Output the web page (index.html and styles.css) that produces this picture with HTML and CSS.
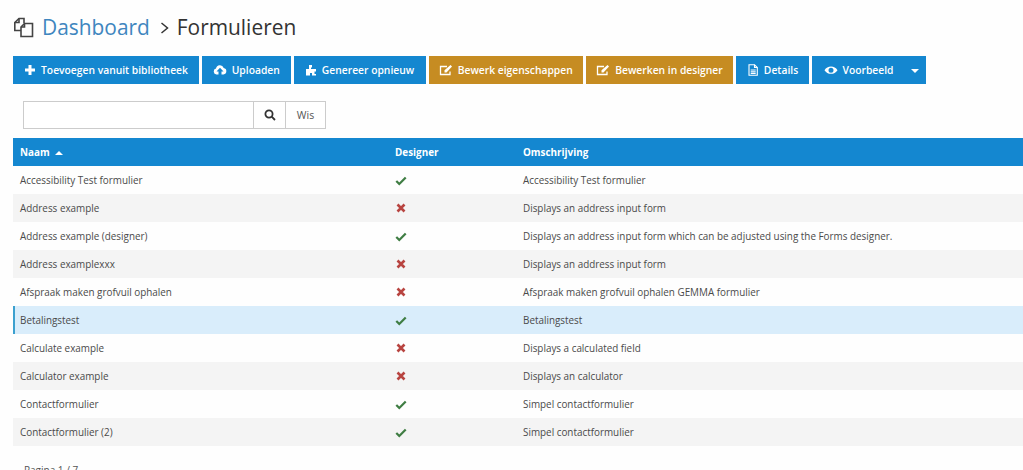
FILE: index.html
```html
<!DOCTYPE html>
<html lang="nl">

<head>
  <meta charset="UTF-8">
  <title>Formulieren</title>
  <link rel="stylesheet" href="styles.css">
</head>

<body>
  <h1 class="title">
    <svg class="title-icon" width="21" height="21" viewBox="0 0 21 21" fill="none" stroke="#444" stroke-width="1.6">
      <path d="M8 13.5H1.8V5.5L6 1.5H11V6"/>
      <path d="M6 1.5V5.5H1.8"/>
      <path d="M8 19.5V10L11.5 6.5H19.5V19.5Z"/>
      <path d="M11.5 6.5V10H8"/>
    </svg>
    <a class="crumb" href="#">Dashboard</a>
    <svg class="sep" width="9" height="12" viewBox="0 0 9 12" fill="none" stroke="#333" stroke-width="1.500"><path d="M1.500 1 7.500 6 1.500 11"/></svg>
    <span>Formulieren</span>
  </h1>

  <div class="toolbar">
    <a class="btn w1" href="#">
      <svg class="ico" viewBox="0 0 12 12" fill="#fff"><path d="M4.500 1h3v3.500H11v3H7.500V11h-3V7.500H1v-3h3.500z"/></svg>
      Toevoegen vanuit bibliotheek
    </a>
    <a class="btn w2" href="#">
      <svg class="ico ico-wide" viewBox="0 0 14 12" fill="#fff"><path d="M3.500 10.500A3 3 0 0 1 3 4.600 4 4 0 0 1 10.700 4 3.300 3.300 0 0 1 10.500 10.500H8.500V7.500H10.500L7 3.800 3.500 7.500H5.500V10.500Z"/></svg>
      Uploaden
    </a>
    <a class="btn w3" href="#">
      <svg class="ico" viewBox="0 0 12 12" fill="#fff"><path d="M4 1h3v2.500h-1V5h5v2.500H9.500V10H11v1.500H7V9H5v2.500H1V5h3z"/></svg>
      Genereer opnieuw
    </a>
    <a class="btn btn-edit w4" href="#">
      <svg class="ico ico-wide" viewBox="0 0 14 12" fill="none" stroke="#fff" stroke-width="1.300"><path d="M11 7.500V10.500H1.500V2.500H8"/><path d="M5.500 8.500V6.300L11.500 1 13 2.500 7.500 8.500Z" fill="#fff" stroke="none"/></svg>
      Bewerk eigenschappen
    </a>
    <a class="btn btn-edit w5" href="#">
      <svg class="ico ico-wide" viewBox="0 0 14 12" fill="none" stroke="#fff" stroke-width="1.300"><path d="M11 7.500V10.500H1.500V2.500H8"/><path d="M5.500 8.500V6.300L11.500 1 13 2.500 7.500 8.500Z" fill="#fff" stroke="none"/></svg>
      Bewerken in designer
    </a>
    <a class="btn w6" href="#">
      <svg class="ico" viewBox="0 0 12 12" fill="none" stroke="#fff" stroke-width="1.100"><path d="M2 .7H7.500L10.300 3.500V11.300H2Z"/><path d="M7.500.7V3.500H10.300M3.700 6H8.700M3.700 7.700H8.700M3.700 9.400H8.700"/></svg>
      Details
    </a>
    <div class="btn w7">
      <svg class="ico ico-wide" viewBox="0 0 14 12" fill="#fff"><path fill-rule="evenodd" d="M.5 6.200C2 3.700 4.300 2.500 7 2.500s5 1.200 6.500 3.700C12 8.700 9.700 9.800 7 9.800S2 8.700.5 6.200ZM7 3.700a2.500 2.500 0 1 0 0 5 2.500 2.500 0 0 0 0-5Z"/></svg>
      Voorbeeld
      <span class="caret"></span>
    </div>
  </div>

  <form class="search">
    <input class="search-input" type="text">
    <button class="search-btn" type="button">
      <svg width="12" height="12" viewBox="0 0 12 12" fill="none" stroke="#333" stroke-width="1.800"><circle cx="5" cy="5" r="3.600"/><path d="M7.700 7.700 11 11"/></svg>
    </button>
    <button class="search-btn clear" type="button">Wis</button>
  </form>

  <table class="grid">
    <thead>
      <tr>
        <th class="col-name">Naam <span class="sort"></span></th>
        <th class="col-designer">Designer</th>
        <th>Omschrijving</th>
      </tr>
    </thead>
    <tbody>
      <tr><td>Accessibility Test formulier</td><td><svg class="yes" viewBox="0 0 14 12"><path d="M1.500 6.500 5 10 12.500 2.500"/></svg></td><td>Accessibility Test formulier</td></tr>
      <tr><td>Address example</td><td><svg class="no" viewBox="0 0 12 12"><path d="M2.500 2.500 9.500 9.500M9.500 2.500 2.500 9.500"/></svg></td><td>Displays an address input form</td></tr>
      <tr><td>Address example (designer)</td><td><svg class="yes" viewBox="0 0 14 12"><path d="M1.500 6.500 5 10 12.500 2.500"/></svg></td><td>Displays an address input form which can be adjusted using the Forms designer.</td></tr>
      <tr><td>Address examplexxx</td><td><svg class="no" viewBox="0 0 12 12"><path d="M2.500 2.500 9.500 9.500M9.500 2.500 2.500 9.500"/></svg></td><td>Displays an address input form</td></tr>
      <tr><td>Afspraak maken grofvuil ophalen</td><td><svg class="no" viewBox="0 0 12 12"><path d="M2.500 2.500 9.500 9.500M9.500 2.500 2.500 9.500"/></svg></td><td>Afspraak maken grofvuil ophalen GEMMA formulier</td></tr>
      <tr class="selected"><td>Betalingstest</td><td><svg class="yes" viewBox="0 0 14 12"><path d="M1.500 6.500 5 10 12.500 2.500"/></svg></td><td>Betalingstest</td></tr>
      <tr><td>Calculate example</td><td><svg class="no" viewBox="0 0 12 12"><path d="M2.500 2.500 9.500 9.500M9.500 2.500 2.500 9.500"/></svg></td><td>Displays a calculated field</td></tr>
      <tr><td>Calculator example</td><td><svg class="no" viewBox="0 0 12 12"><path d="M2.500 2.500 9.500 9.500M9.500 2.500 2.500 9.500"/></svg></td><td>Displays an calculator</td></tr>
      <tr><td>Contactformulier</td><td><svg class="yes" viewBox="0 0 14 12"><path d="M1.500 6.500 5 10 12.500 2.500"/></svg></td><td>Simpel contactformulier</td></tr>
      <tr><td>Contactformulier (2)</td><td><svg class="yes" viewBox="0 0 14 12"><path d="M1.500 6.500 5 10 12.500 2.500"/></svg></td><td>Simpel contactformulier</td></tr>
    </tbody>
  </table>

  <p class="pager">Pagina 1 / 7</p>
</body>

</html>
```

FILE: styles.css
```css
* {
  box-sizing: border-box;
}

html,
body {
  height: 470px;
  overflow: hidden;
}

body {
  margin: 0;
  padding-left: 13px;
  background: #fefefe;
  color: #444;
  font-family: "Open Sans", "Noto Sans", sans-serif;
  font-size: 9.900px;
}

.title {
  display: flex;
  align-items: center;
  height: 56px;
  margin: 0;
  padding-bottom: 2px;
  font-size: 20.900px;
  font-weight: 400;
  color: #333;
}

.title-icon {
  margin-right: 8px;
}

.crumb {
  color: #3f86bf;
  text-decoration: none;
}

.sep {
  margin: 2px 8px 0 10px;
}

.toolbar {
  display: flex;
  gap: 3px;
  height: 28px;
}

.btn {
  display: flex;
  align-items: center;
  justify-content: center;
  gap: 5px;
  background: #1487d0;
  color: #fff;
  font-size: 10.300px;
  font-weight: 600;
  text-decoration: none;
  white-space: nowrap;
}

.btn-edit {
  background: #c68c22;
}

.w1 { width: 186px; }
.w2 { width: 88.500px; }
.w3 { width: 132px; }
.w4 { width: 154.500px; }
.w5 { width: 147px; }
.w6 { width: 73px; }
.w7 { width: 114px; padding-right: 21px; position: relative; }

.ico {
  width: 12px;
  height: 12px;
}

.ico-wide {
  width: 14px;
}

.caret {
  position: absolute;
  right: 7px;
  top: 13px;
  border-left: 4px solid transparent;
  border-right: 4px solid transparent;
  border-top: 4px solid #fff;
}

.search {
  display: flex;
  height: 28px;
  margin: 17px 0 9px 10px;
}

.search-input {
  width: 231px;
  border: 1px solid #ccc;
  background: #fff;
  outline: none;
}

.search-btn {
  display: flex;
  align-items: center;
  justify-content: center;
  width: 33px;
  margin-left: -1px;
  border: 1px solid #ccc;
  background: #fff;
  color: #555;
  font: inherit;
  font-size: 10.500px;
}

.clear {
  width: 41px;
}

.grid {
  width: 1010px;
  border-collapse: collapse;
  table-layout: fixed;
}

.grid th {
  height: 28px;
  padding: 0 7px;
  background: #1487d0;
  color: #fff;
  text-align: left;
  font-weight: 700;
}

.col-name {
  width: 375px;
}

.col-designer {
  width: 128px;
}

.sort {
  display: inline-block;
  margin: 0 0 1px 3px;
  border-left: 4px solid transparent;
  border-right: 4px solid transparent;
  border-bottom: 4px solid #fff;
}

.grid td {
  height: 28px;
  padding: 0 7px;
  color: #4a4a4a;
  white-space: nowrap;
}

.grid tbody tr:nth-child(even) {
  background: #f4f4f4;
}

.grid tbody tr.selected {
  background: #d9edfb;
}

.selected td:first-child {
  box-shadow: inset 2px 0 0 #3ba0cf;
}

.yes,
.no {
  display: block;
  fill: none;
  stroke-width: 2.600;
}

.yes {
  width: 12px;
  height: 11px;
  stroke: #3f7d43;
}

.no {
  width: 12px;
  height: 12px;
  stroke: #b84440;
}

.pager {
  margin: 17px 0 0 11px;
  font-size: 10px;
  color: #555;
}
```
